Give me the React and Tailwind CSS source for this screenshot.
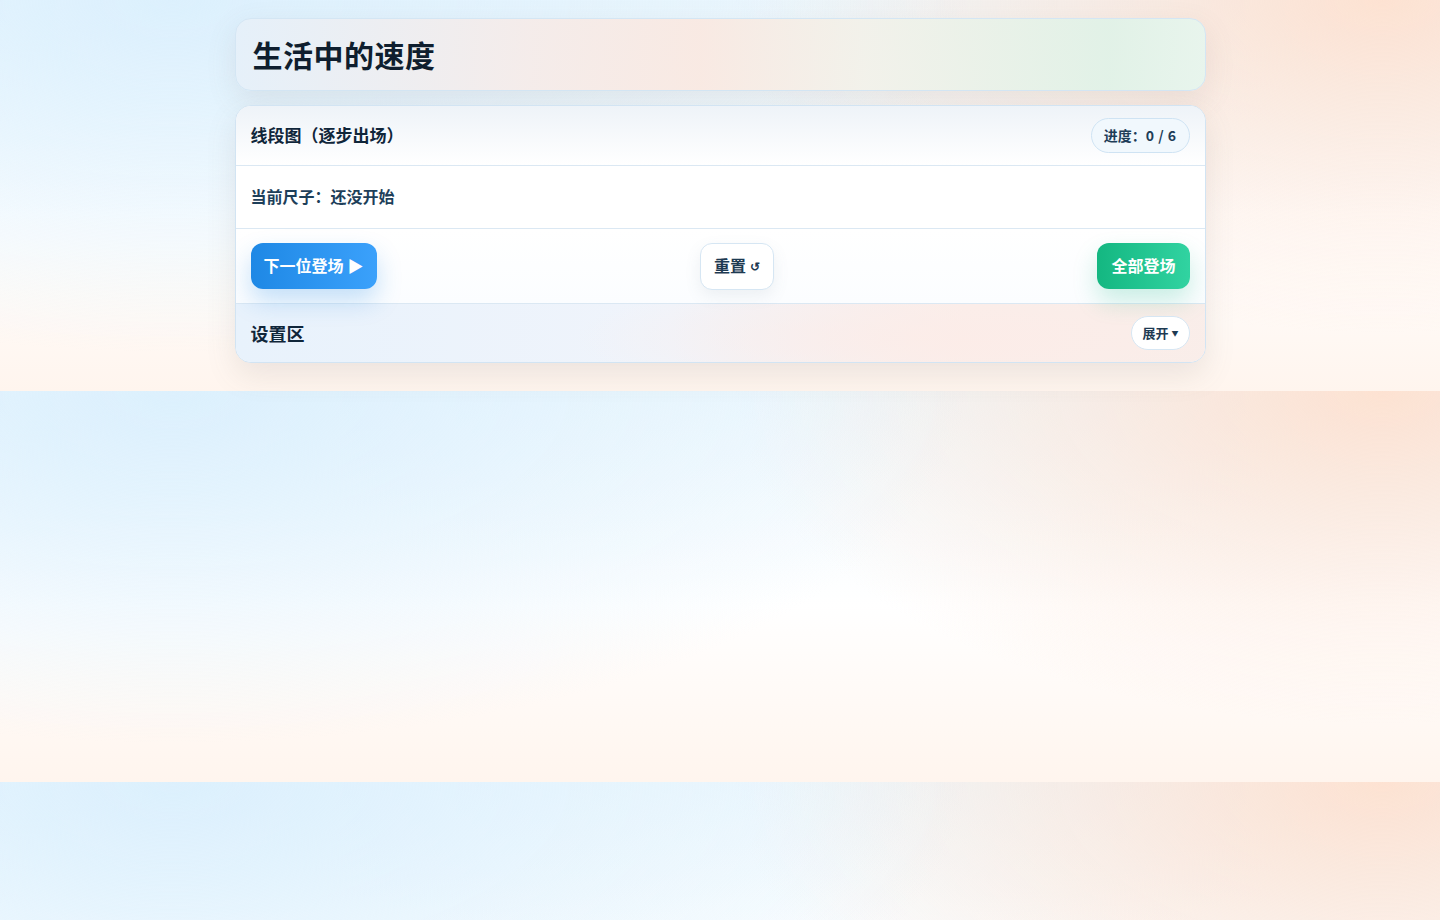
export default function App() {
  return (
    <div className="min-h-screen w-full bg-[radial-gradient(ellipse_55%_90%_at_12%_0%,#dcf0fd_0%,rgba(220,240,253,0)_100%),radial-gradient(ellipse_45%_85%_at_96%_0%,#fde2d2_0%,rgba(253,226,210,0)_100%),linear-gradient(180deg,#eef8fe_0%,#ffffff_55%,#fff5ee_100%)] bg-size-[100%_391px] bg-repeat font-['Noto_Sans_CJK_SC','Noto_Sans',sans-serif]">
      <div className="mx-auto flex w-[971px] flex-col gap-[14px] pt-[18px] pb-[28px]">
        <div className="flex h-[73px] items-center rounded-2xl border border-[#d4e6f4] bg-[linear-gradient(90deg,rgba(230,240,249,0.9)_0%,rgba(246,235,232,0.9)_30%,rgba(250,232,224,0.9)_48%,rgba(242,241,233,0.9)_65%,rgba(223,242,231,0.9)_90%,rgba(230,246,238,0.9)_100%)] px-[17px] shadow-[0_10px_30px_rgba(120,110,100,0.12)]">
          <h1 className="mt-[-2px] text-[30px] font-bold leading-none tracking-[0.5px] text-[#0f1e2e]">生活中的速度</h1>
        </div>

        <div className="overflow-hidden rounded-2xl border border-[#d2e4f3] bg-white shadow-[0_12px_30px_rgba(110,100,90,0.13)]">
          <div className="flex h-[60px] items-center justify-between border-b border-[#dbe8f3] bg-[linear-gradient(180deg,#eef3f8_0%,#ffffff_100%)] px-[15px]">
            <div className="mt-[-2px] text-[17px] font-bold text-[#10263a]">线段图（逐步出场）</div>
            <div className="flex h-[35px] items-center rounded-full border border-[#cfe3f3] bg-[#f1f8fd] px-[12px] text-[14px] font-bold text-[#1e3d58]">
              进度：<span className="tracking-[0.5px]">0 / 6</span>
            </div>
          </div>

          <div className="flex h-[63px] items-center border-b border-[#dbe8f3] px-[15px]">
            <div className="mt-[-3px] text-[16px] font-bold text-[#1e3f5a]">当前尺子：还没开始</div>
          </div>

          <div className="flex h-[75px] items-center justify-between border-b border-[#dbe8f3] bg-[linear-gradient(180deg,#ffffff_0%,#fbfdff_100%)] px-[15px]">
            <button className="flex h-[46px] items-center gap-[4px] rounded-xl bg-[linear-gradient(90deg,#1e88e5_0%,#3ba1fb_100%)] px-[13px] text-[16px] font-bold text-white shadow-[0_12px_24px_rgba(30,136,229,0.25)]">
              <span className="mt-[-2px]">下一位登场</span> <span className="mt-[-2px] text-[16px]">▶</span>
            </button>
            <button className="flex h-[47px] items-center gap-[4px] rounded-xl border border-[#d6e6f3] bg-white px-[13px] text-[16px] font-bold text-[#1e3a52] shadow-[0_6px_16px_rgba(100,120,140,0.10)]">
              <span className="mt-[-2px]">重置</span> <span className="text-[12px]">↺</span>
            </button>
            <button className="flex h-[46px] items-center rounded-xl bg-[linear-gradient(90deg,#14b781_0%,#31d3a1_100%)] px-[14px] text-[16px] font-bold text-white shadow-[0_12px_24px_rgba(22,184,130,0.22)]">
              <span className="mt-[-2px]">全部登场</span>
            </button>
          </div>

          <div className="flex h-[58px] items-center justify-between bg-[radial-gradient(ellipse_40%_120%_at_75%_60%,rgba(252,236,232,0.9)_0%,rgba(252,236,232,0)_100%),linear-gradient(90deg,#e8f2fc_0%,#f0f4fb_45%,#faeeea_75%,#f8eeea_100%)] px-[15px]">
            <div className="text-[18px] font-bold text-[#10263a]">设置区</div>
            <button className="flex h-[34px] items-center gap-[3px] rounded-full border border-[#d6e6f3] bg-white px-[10px] text-[13px] font-bold text-[#1e3a52]">
              <span className="mt-[-1px]">展开</span> <span className="text-[7px]">▼</span>
            </button>
          </div>
        </div>
      </div>
    </div>
  );
}
